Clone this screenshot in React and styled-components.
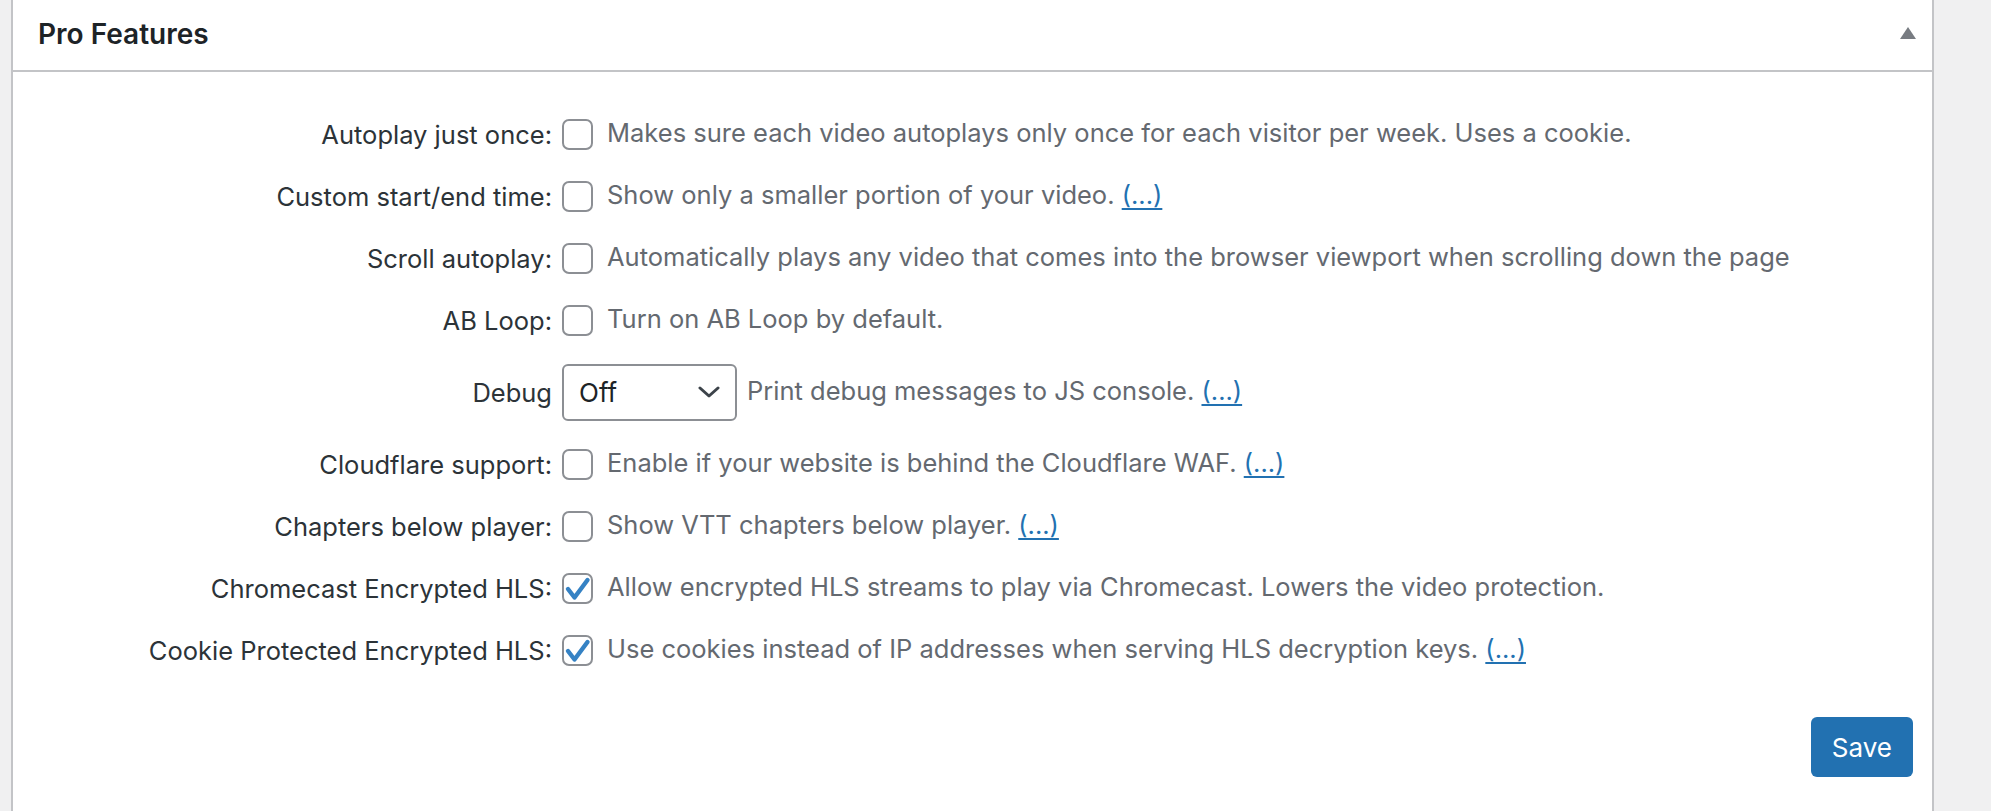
import React from "react";
import styled, {createGlobalStyle} from "styled-components";

const Colors = {
  page: "#f0f0f1",
  border: "#c3c4c7",
  text: "#1d2327",
  label: "#2c3338",
  muted: "#646970",
  field: "#8c8f94",
  blue: "#2271b1",
  check: "#3582c4",
};

const GlobalStyle = createGlobalStyle`
  html, body {
    margin: 0;
    padding: 0;
    background: ${Colors.page};
    font-family: Inter, "Noto Sans", "Liberation Sans", sans-serif;
  }
`;

const features = [
  {label: "Autoplay just once:", text: "Makes sure each video autoplays only once for each visitor per week. Uses a cookie."},
  {label: "Custom start/end time:", text: "Show only a smaller portion of your video.", more: true},
  {label: "Scroll autoplay:", text: "Automatically plays any video that comes into the browser viewport when scrolling down the page"},
  {label: "AB Loop:", text: "Turn on AB Loop by default."},
  {debug: true},
  {label: "Cloudflare support:", text: "Enable if your website is behind the Cloudflare WAF.", more: true},
  {label: "Chapters below player:", text: "Show VTT chapters below player.", more: true},
  {label: "Chromecast Encrypted HLS:", text: "Allow encrypted HLS streams to play via Chromecast. Lowers the video protection.", checked: true},
  {label: "Cookie Protected Encrypted HLS:", text: "Use cookies instead of IP addresses when serving HLS decryption keys.", checked: true, more: true},
];

const Check = ({checked}) => (
  <Box>
    {checked && <svg width="31" height="31" viewBox="0 0 31 31">
      <polyline points="6,16 12.5,24.5 25.5,7" fill="none" stroke={Colors.check}
                strokeWidth="4.4" strokeLinecap="round" strokeLinejoin="round"/>
    </svg>}
  </Box>
);

const Chevron = () => (
  <svg width="22" height="12" viewBox="0 0 22 12">
    <polyline points="2,2 11,10 20,2" fill="none" stroke="#3c434a" strokeWidth="3" strokeLinecap="round" strokeLinejoin="round"/>
  </svg>
);

export default function App() {
  return <Page>
    <GlobalStyle/>
    <Panel>
      <Header>
        <Title>Pro Features</Title>
        <Toggle/>
      </Header>
      <Body>
        {features.map((f, i) => f.debug ?
          <Row key={i} tall>
            <Label>Debug</Label>
            <Select>
              <span>Off</span>
              <Chevron/>
            </Select>
            <Desc narrow>Print debug messages to JS console. <More>(...)</More></Desc>
          </Row> :
          <Row key={i}>
            <Label>{f.label}</Label>
            <Check checked={f.checked}/>
            <Desc>{f.text}{f.more && <> <More>(...)</More></>}</Desc>
          </Row>
        )}
        <Footer>
          <SaveButton>Save</SaveButton>
        </Footer>
      </Body>
    </Panel>
  </Page>
}

const Page = styled.div`
  padding: 0 57px 0 11px;
  min-height: 811px;
  box-sizing: border-box;
  display: flex;
`;

const Panel = styled.div`
  flex: 1;
  background: #fff;
  border: 2px solid ${Colors.border};
  border-top: none;
  border-bottom: none;
`;

const Header = styled.div`
  height: 70px;
  border-bottom: 2px solid ${Colors.border};
  display: flex;
  align-items: center;
  justify-content: space-between;
  padding: 0 16px 0 25px;
`;

const Title = styled.h2`
  margin: 0;
  font-size: 28px;
  font-weight: 600;
  color: ${Colors.text};
  padding-bottom: 3px;
`;

const Toggle = styled.span`
  width: 0;
  height: 0;
  border-left: 8px solid transparent;
  border-right: 8px solid transparent;
  border-bottom: 12px solid #787c82;
  margin-bottom: 5px;
`;

const Body = styled.div`
  padding: 31px 19px 0 0;
`;

const Row = styled.div`
  display: flex;
  align-items: center;
  min-height: 62px;
  padding: ${p => p.tall ? "10px 0 10px" : "0"};
`;

const Label = styled.label`
  width: 549px;
  flex-shrink: 0;
  text-align: right;
  padding-right: 10px;
  box-sizing: border-box;
  font-size: 25.5px;
  color: ${Colors.label};
`;

const Box = styled.span`
  width: 31px;
  height: 31px;
  box-sizing: border-box;
  border: 2px solid ${Colors.field};
  border-radius: 7px;
  flex-shrink: 0;
  display: flex;
  align-items: center;
  justify-content: center;

  svg {
    margin: -2px;
  }
`;

const Select = styled.div`
  width: 175px;
  height: 57px;
  box-sizing: border-box;
  border: 2px solid ${Colors.field};
  border-radius: 6px;
  display: flex;
  align-items: center;
  justify-content: space-between;
  padding: 0 15px 0 15px;
  font-size: 26px;
  color: ${Colors.text};
`;

const Desc = styled.span`
  margin-left: ${p => p.narrow ? "10px" : "14px"};
  font-size: 25.5px;
  color: ${Colors.muted};
  margin-bottom: 3px;
`;

const More = styled.a`
  color: ${Colors.blue};
  text-decoration: underline;
  text-underline-offset: 4px;
`;

const Footer = styled.div`
  display: flex;
  justify-content: flex-end;
  padding-top: 36px;
`;

const SaveButton = styled.button`
  height: 60px;
  padding: 0 21px;
  border: none;
  border-radius: 6px;
  background: ${Colors.blue};
  color: #fff;
  font-family: inherit;
  font-size: 26px;
`;
